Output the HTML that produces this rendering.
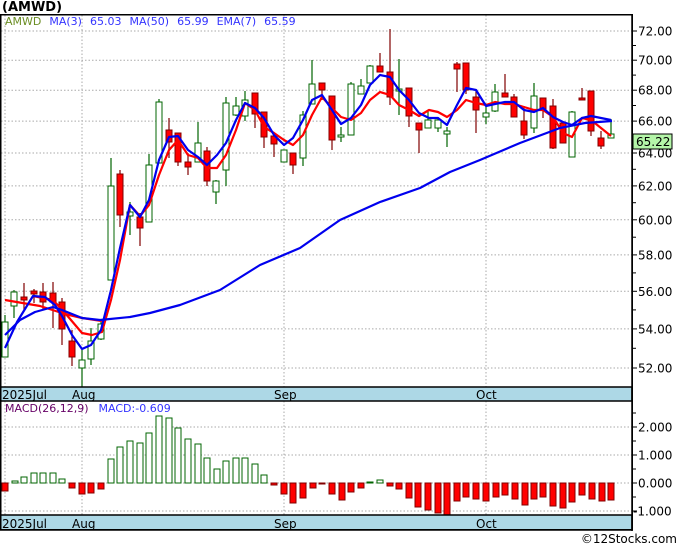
<!DOCTYPE html>
<html><head><meta charset="utf-8"><style>
html,body{margin:0;padding:0;background:#fff;}
body{width:680px;height:546px;overflow:hidden;font-family:"Liberation Sans",sans-serif;}
svg text{font-family:"DejaVu Sans","Liberation Sans",sans-serif;}
</style></head><body>
<svg id="s" width="680" height="546" viewBox="0 0 680 546" xmlns="http://www.w3.org/2000/svg"></svg>
<script>
var s=document.getElementById('s');var h='';
function Y(p){return 31+1035.6*(Math.log(72)-Math.log(p));}
h+='<rect x="0" y="0" width="680" height="546" fill="#fff"/>';
h+='<text x="2" y="11" font-size="13" font-weight="bold" fill="#000">(AMWD)</text>';
// price grid
for(var p=52;p<=72;p+=2){var y=Y(p).toFixed(1);h+='<line x1="1" y1="'+y+'" x2="632" y2="'+y+'" stroke="#aaa" stroke-dasharray="1.5,2"/>';
h+='<line x1="632" y1="'+y+'" x2="637" y2="'+y+'" stroke="#000"/>';
h+='<text x="638" y="'+(+y+4.5)+'" font-size="12" fill="#000">'+p+'.00</text>';
var ym=Y(p+1).toFixed(1);if(p<72)h+='<line x1="632" y1="'+ym+'" x2="636" y2="'+ym+'" stroke="#000"/>';}
[5,82,284,486].forEach(function(x){h+='<line x1="'+x+'" y1="15" x2="'+x+'" y2="387" stroke="#aaa" stroke-dasharray="1.5,2"/><line x1="'+x+'" y1="401" x2="'+x+'" y2="515" stroke="#aaa" stroke-dasharray="1.5,2"/>';});
// macd grid
[[427,'2.000'],[455,'1.000'],[483,'0.000'],[511,'-1.000']].forEach(function(a){h+='<line x1="1" y1="'+a[0]+'" x2="632" y2="'+a[0]+'" stroke="#aaa" stroke-dasharray="1.5,2"/><line x1="632" y1="'+a[0]+'" x2="637" y2="'+a[0]+'" stroke="#000"/><line x1="632" y1="'+(a[0]-14)+'" x2="636" y2="'+(a[0]-14)+'" stroke="#000"/>';
h+='<text x="'+(a[1][0]=='-'?633:638)+'" y="'+(a[0]+4.5)+'" font-size="12" fill="#000">'+a[1]+'</text>';});
// candles: x, bodyTop, bodyBot, wickTop, wickBot, up
var C=[[5,322,357,315,357,1],[14,292,306,290,318,1],[24,297,300,283,311,0],[34,291,294,289,303,0],[43,292,302,283,310,0],[53,293,302,282,328,0],[62,302,329,298,345,0],[72,341,357,330,366,0],[82,360,368,350,387,1],[91,341,359,328,365,1],[101,324,339,322,340,1],[111,186,280,158,280,1],[120,174,215,170,227,0],[130,212,216,202,235,1],[140,217,228,213,246,0],[149,165,222,154,222,1],[159,102,163,99,163,1],[169,130,142,118,158,0],[178,133,162,133,166,0],[188,162,167,153,175,0],[198,143,162,122,162,1],[207,151,181,147,186,0],[216,181,192,180,204,1],[226,103,170,97,186,1],[236,106,115,97,116,1],[245,100,116,91,121,1],[255,93,114,93,128,0],[264,112,137,112,148,0],[274,136,144,136,157,0],[284,150,162,150,162,1],[293,153,165,153,174,0],[303,115,158,111,166,1],[312,84,104,60,104,1],[322,83,90,83,100,0],[332,96,140,96,150,0],[341,135,137,127,142,1],[351,84,135,82,135,1],[361,86,94,79,94,1],[370,66,83,65,83,1],[380,66,72,53,72,0],[390,72,97,29,105,0],[399,89,91,59,115,1],[409,88,116,88,127,0],[419,123,130,123,153,0],[428,120,128,110,128,1],[438,120,128,117,132,1],[447,131,134,127,147,1],[457,64,69,62,92,0],[466,63,90,63,94,0],[476,97,110,89,133,0],[486,113,117,107,124,1],[495,92,111,84,112,1],[505,93,97,74,97,0],[514,97,117,94,117,0],[524,121,135,106,139,0],[534,96,128,83,133,1],[543,98,109,98,118,0],[553,106,148,99,149,0],[563,123,143,123,143,0],[572,112,157,111,157,1],[582,98,100,88,100,0],[591,91,131,91,136,0],[601,138,146,131,149,0],[611,134,138,119,138,1]];
C.forEach(function(c){var col=c[5]?'#006400':'#800000';h+='<line x1="'+c[0]+'" y1="'+c[3]+'" x2="'+c[0]+'" y2="'+c[4]+'" stroke="'+col+'" stroke-width="1.2"/>';
h+='<rect x="'+(c[0]-3)+'" y="'+c[1]+'" width="6" height="'+Math.max(2,c[2]-c[1])+'" fill="'+(c[5]?'#fff':'#f00')+'" stroke="'+col+'" stroke-width="1"/>';});
function pl(pts,col){h+='<polyline fill="none" stroke="'+col+'" stroke-width="2.2" stroke-linejoin="round" points="'+pts+'"/>';}
pl('5,300 40,306 65,314 82,318 102,321','#f00');
pl('33,296 53,300 65,313 82,333 92,335 102,332 111,300 120,260 130,205 140,216 149,205 159,175 169,150 178,140 188,155 198,158 207,168 217,168 226,155 236,130 245,103 255,110 264,127 274,133 284,140 293,145 303,135 312,115 322,97 332,108 341,117 351,120 361,113 370,100 380,92 390,95 399,105 409,110 419,116 429,110 438,112 447,117 457,110 466,100 476,103 486,105 495,102 505,104 514,104 524,107 534,110 543,110 553,117 563,133 572,137 582,118 591,120 601,128 611,136','#f00');
pl('5,335 20,320 35,312 53,307 62,310 82,318 100,320 130,317 150,313 180,305 220,290 260,265 300,248 340,220 380,202 420,188 450,172 480,160 520,143 560,128 585,123 612,121','#0000ee');
pl('5,348 17,322 33,296 45,297 55,305 62,316 72,335 82,349 91,345 101,330 111,290 120,248 130,205 140,217 149,200 159,160 169,137 178,136 188,150 198,157 207,165 217,155 226,143 236,120 245,103 255,108 264,118 274,135 284,145 293,138 303,120 312,100 322,95 332,110 341,124 351,118 361,105 370,85 380,75 390,77 399,90 409,100 419,113 429,118 438,118 447,125 457,105 466,88 476,90 486,106 495,104 505,102 514,102 524,110 534,112 543,108 553,117 563,122 572,125 582,118 591,116 601,118 611,120','#0000ee');
// macd bars
var M=[[5,-8],[15,2],[24,6],[34,10],[43,10],[53,10],[62,4],[72,-5],[82,-11],[91,-10],[101,-6],[111,24],[120,36],[130,42],[140,40],[149,50],[159,67],[169,65],[178,55],[188,44],[198,39],[207,25],[217,14],[226,22],[236,25],[245,25],[255,19],[264,8],[274,-2],[284,-11],[293,-20],[303,-15],[313,-5],[322,-1],[332,-11],[342,-17],[351,-9],[361,-5],[370,1],[380,3],[390,-3],[399,-6],[409,-15],[418,-24],[428,-27],[438,-30],[447,-32],[457,-18],[466,-14],[476,-16],[486,-18],[496,-14],[505,-12],[515,-16],[525,-22],[534,-16],[543,-14],[553,-23],[563,-25],[572,-19],[582,-12],[592,-16],[602,-18],[611,-17]];
M.forEach(function(m){var v=m[1];if(v>0)h+='<rect x="'+(m[0]-3)+'" y="'+(483-v)+'" width="6" height="'+v+'" fill="#fff" stroke="#006400" stroke-width="1"/>';
else h+='<rect x="'+(m[0]-3)+'" y="483" width="6" height="'+(-v)+'" fill="#f00" stroke="#800000" stroke-width="1"/>';});
// strips
[[387,401],[515,530]].forEach(function(r){h+='<rect x="0" y="'+r[0]+'" width="632" height="'+(r[1]-r[0])+'" fill="#add8e6" stroke="#000" stroke-width="1.5"/>';
h+='<text x="2" y="'+(r[1]-2)+'" font-size="12" fill="#000">2025Jul</text><text x="72" y="'+(r[1]-2)+'" font-size="12">Aug</text><text x="274" y="'+(r[1]-2)+'" font-size="12">Sep</text><text x="476" y="'+(r[1]-2)+'" font-size="12">Oct</text>';});
// frame
h+='<rect x="0.75" y="14.75" width="631.5" height="515" fill="none" stroke="#000" stroke-width="1.5"/>';
h+='<line x1="632" y1="14" x2="632" y2="531" stroke="#000" stroke-width="1.5"/>';
// legends
h+='<text x="5" y="25" font-size="11"><tspan fill="#6b8e23">AMWD</tspan><tspan fill="#3333ff" dx="8">MA(3)</tspan><tspan fill="#3333ff" dx="8">65.03</tspan><tspan fill="#3333ff" dx="8">MA(50)</tspan><tspan fill="#3333ff" dx="8">65.99</tspan><tspan fill="#3333ff" dx="8">EMA(7)</tspan><tspan fill="#3333ff" dx="8">65.59</tspan></text>';
h+='<text x="5" y="412" font-size="11"><tspan fill="#660066">MACD(26,12,9)</tspan><tspan fill="#3333ff" dx="10">MACD:-0.609</tspan></text>';
// price box
h+='<rect x="633" y="134" width="39" height="15" fill="#b4f5a8" stroke="#000"/><text x="636" y="146" font-size="12" fill="#000">65.22</text>';
h+='<text x="677" y="543" font-size="12" text-anchor="end" fill="#000">©12Stocks.com</text>';
s.innerHTML=h;
</script>
</body></html>
